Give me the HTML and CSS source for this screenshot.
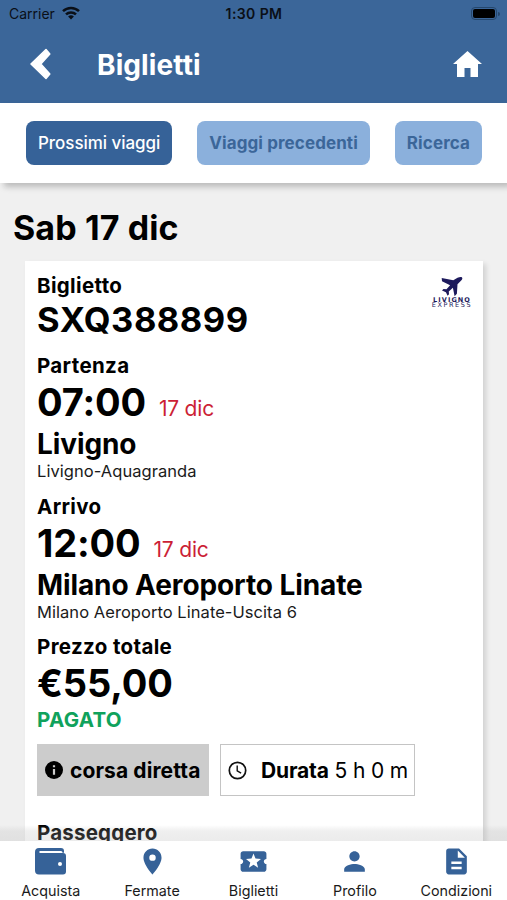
FILE: index.html
```html
<!DOCTYPE html>
<html lang="it">

<head>
    <meta charset="UTF-8">
    <meta name="viewport" content="width=device-width, initial-scale=1.0">
    <title>Biglietti</title>
    <link rel="stylesheet" href="styles.css">
</head>

<body>
    <div class="app">
        <header class="header">
            <div class="status">
                <div class="carrier">
                    <span>Carrier</span>
                    <svg width="18" height="14" viewBox="0 0 18 14" fill="none" stroke="#0a0f17" stroke-width="2.5">
                        <path d="M1 5.2a11.6 11.6 0 0 1 16 0" />
                        <path d="M4 8.4a7.2 7.2 0 0 1 10 0" />
                        <path d="M9 13.4L6.1 10.6a4.2 4.2 0 0 1 5.800 0z" fill="#0a0f17" stroke="none" />
                    </svg>
                </div>
                <div class="clock">1:30 PM</div>
                <div class="battery"><span></span></div>
            </div>
            <div class="titleBar">
                <svg class="back" width="22" height="32" viewBox="0 0 22 32">
                    <path d="M1 16L16 1.500l3.800 4.500L10.800 16l9 10L16 30.500z" fill="#fff" stroke="#fff" stroke-width="1.500" stroke-linejoin="round" />
                </svg>
                <h1>Biglietti</h1>
                <svg class="home" width="29" height="26" viewBox="0 0 29 26">
                    <path d="M14.500 0L29 13h-4v13h-7.500v-9h-6v9H4V13H0z" fill="#fff" />
                </svg>
            </div>
        </header>

        <nav class="tabs">
            <div class="tab active">Prossimi viaggi</div>
            <div class="tab">Viaggi precedenti</div>
            <div class="tab">Ricerca</div>
        </nav>

        <main class="content">
            <h2>Sab 17 dic</h2>
            <div class="card">
                <div class="logo">
                    <svg width="22" height="20" viewBox="0 0 22 20">
                        <path d="M21 .4c.8.8.2 2.200-.8 3.200L16.500 7.200l-.6 9.500-2.300 2.600-1.700-8.500-4.100 3.600.2 2.900-1.400 1.500-1.700-3.600L1 13.600l1.500-1.500 3 .2 3.600-4.100L1 4.200l-.3-3.200L12.300 3.200 16.500.8C18 .2 20.200-.3 21 .4z" fill="#1d1a5c" />
                    </svg>
                    <span class="logoTop">LIVIGNO</span>
                    <span class="logoBottom">EXPRESS</span>
                </div>
                <div class="label">Biglietto</div>
                <div class="code">SXQ388899</div>

                <div class="label gap">Partenza</div>
                <div class="time">07:00<span class="date">17 dic</span></div>
                <div class="city">Livigno</div>
                <div class="stop">Livigno-Aquagranda</div>

                <div class="label gap">Arrivo</div>
                <div class="time">12:00<span class="date">17 dic</span></div>
                <div class="city">Milano Aeroporto Linate</div>
                <div class="stop">Milano Aeroporto Linate-Uscita 6</div>

                <div class="label total">Prezzo totale</div>
                <div class="time">€55,00</div>
                <div class="paid">PAGATO</div>

                <div class="badges">
                    <div class="badge direct">
                        <svg width="18" height="18" viewBox="0 0 18 18">
                            <circle cx="9" cy="9" r="9" />
                            <path d="M7.900 4.200h2.200v2.100H7.900zM7.900 8h2.200v5.800H7.900z" fill="#ccc" />
                        </svg>
                        <b>corsa diretta</b>
                    </div>
                    <div class="badge duration">
                        <svg width="19" height="19" viewBox="0 0 19 19" fill="none" stroke="#111" stroke-width="1.700">
                            <circle cx="9.500" cy="9.500" r="8.200" />
                            <path d="M9.200 4.600v5.200l3.900 2.400" stroke-width="1.400" />
                        </svg>
                        <span><b>Durata</b> 5 h 0 m</span>
                    </div>
                </div>

                <div class="label passenger">Passeggero</div>
            </div>
        </main>

        <footer class="menu">
            <div class="item">
                <svg width="31" height="28" viewBox="0 0 31 28">
                    <path d="M4 .5h22a3 3 0 0 1 3 3v1.700h-1.500A1.600 1.600 0 0 0 26 3.600H4.500v1.900H28a3 3 0 0 1 3 3v15.500a3 3 0 0 1-3 3H4a4 4 0 0 1-4-4v-18.500a4 4 0 0 1 4-4z" />
                    <circle cx="25" cy="16.500" r="2" fill="#fff" />
                </svg>
                <span>Acquista</span>
            </div>
            <div class="item">
                <svg width="31" height="31" viewBox="0 0 24 24">
                    <path d="M12 2C8.130 2 5 5.130 5 9c0 5.250 7 13 7 13s7-7.750 7-13c0-3.870-3.130-7-7-7zm0 9.500a2.500 2.500 0 0 1 0-5 2.500 2.500 0 0 1 0 5z" />
                </svg>
                <span>Fermate</span>
            </div>
            <div class="item">
                <svg width="31" height="31" viewBox="0 0 24 24">
                    <path d="M20 12c0-1.100.9-2 2-2V6c0-1.100-.9-2-2-2H4c-1.100 0-1.990.9-1.990 2v4c1.100 0 1.990.9 1.990 2s-.89 2-2 2v4c0 1.100.9 2 2 2h16c1.100 0 2-.9 2-2v-4c-1.100 0-2-.9-2-2zm-4.420 4.800L12 14.500l-3.580 2.300 1.080-4.120-3.290-2.690 4.240-.25L12 5.800l1.540 3.950 4.240.25-3.290 2.690 1.090 4.110z" />
                </svg>
                <span>Biglietti</span>
            </div>
            <div class="item">
                <svg width="31" height="31" viewBox="0 0 24 24">
                    <path d="M12 12c2.210 0 4-1.790 4-4s-1.790-4-4-4-4 1.790-4 4 1.790 4 4 4zm0 2c-2.670 0-8 1.340-8 4v2h16v-2c0-2.660-5.330-4-8-4z" />
                </svg>
                <span>Profilo</span>
            </div>
            <div class="item">
                <svg width="31" height="31" viewBox="0 0 24 24">
                    <path d="M14 2H6c-1.100 0-1.990.9-1.990 2L4 20c0 1.100.89 2 1.990 2H18c1.100 0 2-.9 2-2V8l-6-6zm2 16H8v-2h8v2zm0-4H8v-2h8v2zm-3-5V3.500L18.500 9H13z" />
                </svg>
                <span>Condizioni</span>
            </div>
        </footer>
    </div>
</body>

</html>
```
FILE: styles.css
```css
* {
    margin: 0;
    padding: 0;
    box-sizing: border-box;
}

body {
    font-family: Inter, "Liberation Sans", sans-serif;
    color: #000;
    background-color: #f0f0f0;
}

svg {
    display: block;
    flex: none;
}

.app {
    width: 507px;
    height: 900px;
    overflow: hidden;
    display: flex;
    flex-direction: column;
}

.header {
    flex: none;
    height: 103px;
    background-color: #3b6699;
}

.status {
    height: 28px;
    padding: 0 8px 0 9px;
    display: grid;
    grid-template-columns: 1fr auto 1fr;
    align-items: center;
    color: #0a0f17;
    font-size: 14px;
    line-height: 28px;
}

.carrier {
    display: flex;
    align-items: center;
    gap: 7px;
}

.carrier svg {
    margin-top: -3px;
}

.clock {
    font-weight: 600;
    letter-spacing: 0.4px;
}

.battery {
    justify-self: end;
    width: 26px;
    height: 13px;
    margin-right: 2px;
    margin-top: -1px;
    padding: 1px;
    border: 1px solid #25476d;
    border-radius: 4px;
    position: relative;
}

.battery::after {
    content: "";
    position: absolute;
    top: 4px;
    right: -4px;
    width: 2px;
    height: 4px;
    border-radius: 0 2px 2px 0;
    background-color: #25476d;
}

.battery span {
    display: block;
    height: 9px;
    border-radius: 2px;
    background-color: #000;
}

.titleBar {
    height: 72px;
    padding: 0 25px 0 30px;
    display: flex;
    align-items: center;
    color: #fff;
}

.titleBar h1 {
    flex: 1;
    margin-left: 45px;
    padding-top: 2px;
    font-size: 28px;
    line-height: 34px;
    letter-spacing: 0.1px;
}

.tabs {
    flex: none;
    height: 80px;
    padding: 18px 25px 0 26px;
    display: flex;
    justify-content: space-between;
    background-color: #fff;
    box-shadow: 4px 4px 6px rgba(0, 0, 0, 0.22);
    position: relative;
}

.tab {
    height: 44px;
    padding: 0 12px;
    border-radius: 8px;
    background-color: #8bb0dc;
    color: #3b6699;
    font-size: 17px;
    font-weight: 700;
    line-height: 44px;
    letter-spacing: 0.1px;
    white-space: nowrap;
}

.tab.active {
    background-color: #366298;
    color: #fff;
    font-weight: 500;
    letter-spacing: -0.05px;
}

.content {
    flex: 1;
    min-height: 0;
    padding: 24px 24px 0 25px;
}

.content h2 {
    margin-left: -12px;
    font-size: 34px;
    line-height: 42px;
    letter-spacing: 0.1px;
}

.card {
    height: 640px;
    margin-top: 12px;
    padding: 12px;
    background-color: #fff;
    box-shadow: 3px 3px 5px rgba(0, 0, 0, 0.13);
    position: relative;
}

.logo {
    position: absolute;
    top: 16px;
    right: 10px;
    width: 42px;
    display: flex;
    flex-direction: column;
    align-items: center;
    color: #1d1a5c;
    font-family: "DejaVu Sans", sans-serif;
    font-size: 6.5px;
    line-height: 6px;
}

.logoTop {
    font-weight: 700;
    letter-spacing: 1.1px;
}

.logoBottom {
    letter-spacing: 1.6px;
    line-height: 5px;
}

.label {
    font-size: 20.5px;
    font-weight: 700;
    line-height: 25px;
    letter-spacing: 0.35px;
}

.gap {
    margin-top: 12px;
}

.total {
    margin-top: 11px;
}

.code {
    font-size: 34.5px;
    font-weight: 700;
    line-height: 43px;
    letter-spacing: 0.5px;
}

.time {
    height: 48px;
    font-size: 38px;
    font-weight: 700;
    line-height: 48px;
    letter-spacing: -0.15px;
}

.date {
    margin-left: 13px;
    color: #cc1f36;
    font-size: 21px;
    font-weight: 400;
    line-height: 1;
    letter-spacing: -0.2px;
}

.city {
    font-size: 28px;
    font-weight: 700;
    line-height: 36px;
    height: 35px;
    letter-spacing: -0.1px;
}

.stop {
    color: #1a1a1a;
    font-size: 16.5px;
    line-height: 21px;
    letter-spacing: 0.05px;
}

.paid {
    color: #10a25c;
    font-size: 20.5px;
    font-weight: 700;
    line-height: 25px;
    letter-spacing: 0.3px;
}

.badges {
    margin-top: 12px;
    display: flex;
    gap: 11px;
}

.badge {
    height: 52px;
    display: flex;
    align-items: center;
    font-size: 21px;
    white-space: nowrap;
}

.direct {
    width: 172px;
    padding-left: 8px;
    gap: 7px;
    background-color: #ccc;
    letter-spacing: 0.1px;
}

.duration {
    width: 195px;
    padding-left: 7px;
    gap: 14px;
    border: 1px solid #c4c4c4;
    letter-spacing: -0.15px;
}

.passenger {
    margin-top: 24px;
    letter-spacing: 0.2px;
}

.menu {
    flex: none;
    height: 59px;
    display: flex;
    background-color: #fff;
    position: relative;
}

.menu::before {
    content: "";
    position: absolute;
    left: 0;
    right: 0;
    bottom: 100%;
    height: 16px;
    background: linear-gradient(rgba(182, 182, 182, 0), rgba(182, 182, 182, 0.22) 6px, rgba(182, 182, 182, 0.27));
}

.item {
    flex: 1;
    display: flex;
    flex-direction: column;
    align-items: center;
    padding-top: 5px;
    font-size: 14.3px;
    color: #1a1a1a;
}

.item svg {
    height: 31px;
    fill: #366298;
}

.item span {
    line-height: 28px;
}
```
